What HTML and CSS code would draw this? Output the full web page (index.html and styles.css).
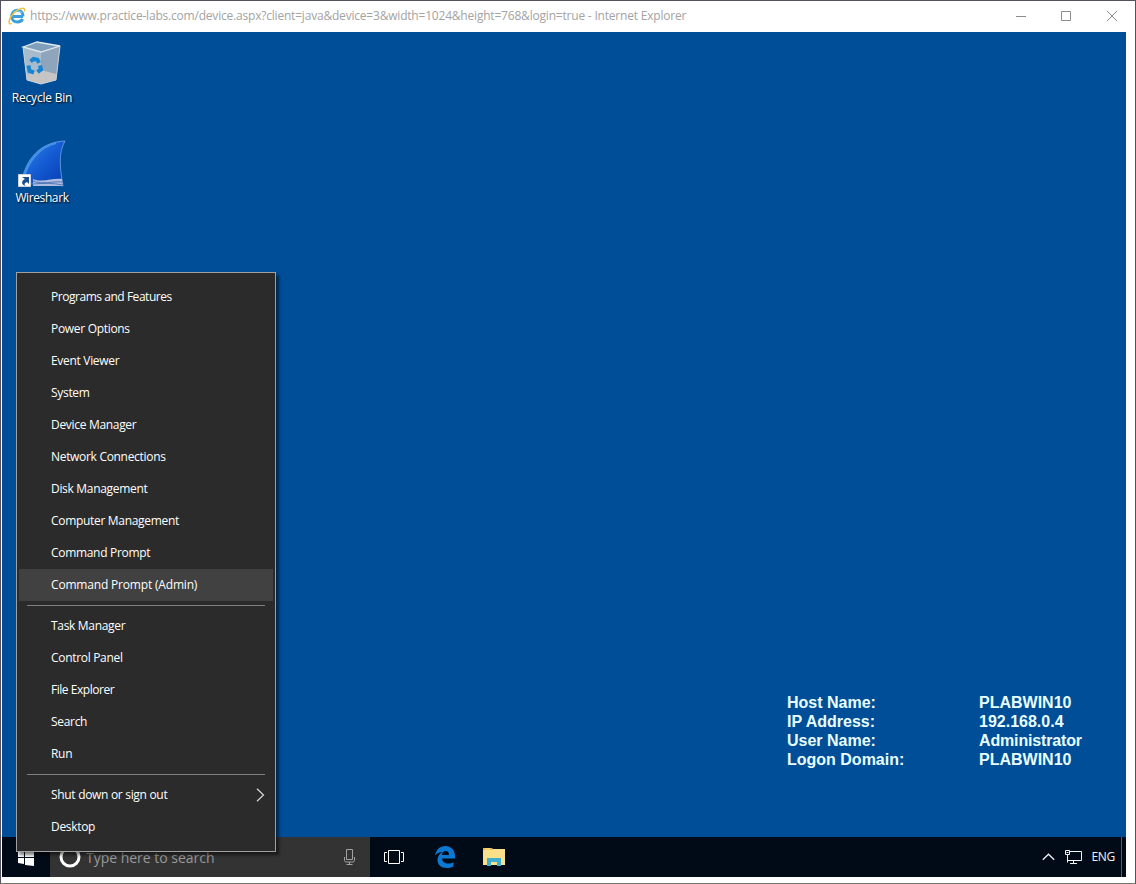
FILE: index.html
```html
<!DOCTYPE html>
<html lang="en">
<head>
<meta charset="utf-8">
<title>Internet Explorer</title>
<link rel="stylesheet" href="styles.css">
</head>
<body>
<div class="window">
  <header class="titlebar">
    <svg class="ie" width="18" height="18" viewBox="0 0 18 18" fill="none">
      <path d="M15.2 9.600H5.200M15 9.300C15 5.600 12.600 3.200 9.400 3.200S3.600 5.800 3.600 9.200s2.500 5.700 5.800 5.700c2.300 0 4.300-1 5.200-2.900" stroke="#3b9fdc" stroke-width="3"/>
      <path d="M14 6C12 3.500 8 3 5.500 5.500" stroke="#79c9f0" stroke-width="1.200"/>
      <path d="M3.600 16.300C1.500 17.500.5 16.300 1.300 13.500 2.500 9 7 3.500 12.500 1.600c3.500-1.200 4.800.4 3.800 3" stroke="#ecc443" stroke-width="1.500"/>
    </svg>
    <span class="title">https://www.practice-labs.com/device.aspx?client=java&amp;device=3&amp;width=1024&amp;height=768&amp;login=true - Internet Explorer</span>
    <svg class="controls" width="104" height="12" viewBox="0 0 104 12" fill="none" stroke="#8c8c8c">
      <path d="M1 6.500h10M46.500 1.500h9v9h-9zM92 1l10 10M102 1L92 11"/>
    </svg>
  </header>
  <main class="desktop">
    <div class="shortcuts">
      <div class="shortcut bin">
        <svg width="48" height="48" viewBox="0 0 48 48">
          <path d="M5 8L19 3l23 4-4 34-15 4-14-4z" fill="#a9bdcd"/>
          <path d="M5 8l18 5v32L9 41z" fill="#a7bbcc"/>
          <path d="M23 13l19-6-4 34-15 4z" fill="#8fa5bc"/>
          <path d="M9 36l14-5 15 4v6l-15 4-14-4z" fill="#c6c5c4"/>
          <path d="M5 8L19 3l23 4-19 6z" fill="#7f9fbc" stroke="#e2e9ed" stroke-width="1.300"/>
          <path d="M5 8l4 33 14 4 15-4 4-34" fill="none" stroke="#c5d0da"/>
          <g fill="none" stroke="#1683d3" stroke-width="4"><path d="M12.500 22.500l3-2.500 4 .8 1.500 3M10.500 26.500l1 5.500 4.500 1.500M19.500 33l3.500-2.500-1-4"/></g>
        </svg>
        <span>Recycle Bin</span>
      </div>
      <div class="shortcut shark">
        <svg width="48" height="48" viewBox="0 0 48 48">
          <defs><linearGradient id="fin" x1="0" y1="0" x2="1" y2="1"><stop stop-color="#3587e8"/><stop offset=".5" stop-color="#145bd3"/><stop offset="1" stop-color="#063bb0"/></linearGradient></defs>
          <path d="M2 46C6 20 21 3 46 2 39 14 41 29 44 47c-12-3-28-3-42-1z" fill="url(#fin)" stroke="#82aee9" stroke-width=".7"/>
          <path d="M4 41C9 21 21 8 37 4" fill="none" stroke="#4292ea" stroke-width="2"/>
          <path d="M14 40c9 4 19-1 29 0l1 7H14z" fill="#aebdde"/>
          <path d="M14 42c10 4 19 0 30 1M14 45c11-1 20-1 30 1" fill="none" stroke="#3f66b0" stroke-width=".8"/>
          <path d="M-.5 35.500h12v12H-.5z" fill="#fff" stroke="#d1d5db"/>
          <path d="M3 38h7v7l-2-2c-3 1-3 3-1 4-5-1-5-5-1-7z" fill="#164e91"/>
        </svg>
        <span>Wireshark</span>
      </div>
    </div>
    <dl class="hostinfo">
      <dt>Host Name:</dt><dd>PLABWIN10</dd>
      <dt>IP Address:</dt><dd>192.168.0.4</dd>
      <dt>User Name:</dt><dd class="user">Administrator</dd>
      <dt>Logon Domain:</dt><dd>PLABWIN10</dd>
    </dl>
  </main>
  <footer class="taskbar">
    <div class="start">
      <svg width="16" height="16" viewBox="0 0 16 16" fill="#fff"><path d="M0 2l6-1v6H0zM7 1l9-1v7H7zM0 8h6v6l-6-1zM7 8h9v8l-9-1z"/></svg>
    </div>
    <div class="search">
      <svg width="22" height="22" viewBox="0 0 22 22" fill="none" stroke="#fff"><circle cx="11" cy="11" r="9" stroke-width="3"/></svg>
      <span>Type here to search</span>
      <svg class="mic" width="13" height="18" viewBox="0 0 13 18" fill="none" stroke="#a2a2a2"><path d="M3.500 1.500h6v10h-6zM1.500 9v3.500l1 1.500h8l1-1.500V9M6.500 14v2.500M3.500 16.500h6"/></svg>
    </div>
    <svg class="taskview" width="22" height="16" viewBox="0 0 22 16" fill="none" stroke="#fff"><path d="M5.500 1.500h11v13h-11zM4 3.500H1.500v9H4M18 3.500h2.500v9H18"/></svg>
    <svg class="edge" width="20" height="22" viewBox="0 0 20 22" fill="#0b78d4"><path d="M0 9.500C1.300 3.500 5 0 10.300 0 16 0 20 4.200 20 10v2.600H7c.2 3.500 3 5 6.200 5 2.200 0 4-.6 5.300-1.400v4C16.800 21.300 14.500 22 12 22 6 22 2.500 18.500 2.500 14c0-3.500 2-6.600 5.400-8C4.800 5.800 2 7.100 0 9.500zM7 9h7c0-2.600-1.100-4-3.200-4C8.700 5 7.400 6.400 7 9z"/></svg>
    <svg class="folder" width="22" height="18" viewBox="0 0 22 18"><path d="M0 0h8l2 1h12v16H0z" fill="#fbe08c"/><path d="M0 0h8l2 1v1H0z" fill="#e6b846"/><path d="M2 1h5" stroke="#fff1b1"/><path d="M4 18V10h14v8h-4v-4H8v4z" fill="#3faed0"/></svg>
    <div class="tray">
      <svg class="chevron" width="13" height="8" viewBox="0 0 13 8" fill="none" stroke="#eef2f5" stroke-width="1.300"><path d="M.8 6.800l5.700-5.600 5.700 5.600"/></svg>
      <svg class="network" width="17" height="14" viewBox="0 0 17 14" fill="none" stroke="#f1f4f6"><path d="M5 1.500h11.500v9H3M.5.500h4v4h-4zM2.500 4.500v8M1.500 2.500h2M5 13.500h7M8.500 10.500v3"/></svg>
      <span>ENG</span>
      <i class="peek"></i>
    </div>
  </footer>
  <nav class="menu">
    <div class="item tight"><span>Programs and Features</span></div>
    <div class="item"><span>Power Options</span></div>
    <div class="item"><span>Event Viewer</span></div>
    <div class="item"><span>System</span></div>
    <div class="item"><span>Device Manager</span></div>
    <div class="item"><span>Network Connections</span></div>
    <div class="item"><span>Disk Management</span></div>
    <div class="item"><span>Computer Management</span></div>
    <div class="item"><span>Command Prompt</span></div>
    <div class="item active"><span>Command Prompt (Admin)</span></div>
    <hr>
    <div class="item"><span>Task Manager</span></div>
    <div class="item"><span>Control Panel</span></div>
    <div class="item tight"><span>File Explorer</span></div>
    <div class="item"><span>Search</span></div>
    <div class="item"><span>Run</span></div>
    <hr>
    <div class="item"><span>Shut down or sign out</span>
      <svg width="9" height="14" viewBox="0 0 9 14" fill="none" stroke="#d8d8d8" stroke-width="1.200"><path d="M1 .7L7.500 7 1 13.300"/></svg>
    </div>
    <div class="item"><span>Desktop</span></div>
  </nav>
</div>
</body>
</html>
```
FILE: styles.css
```css
* { box-sizing: border-box; }
body { margin: 0; font-family: "Open Sans", "Noto Sans", sans-serif; font-size: 12px; }
svg { flex: none; display: block; overflow: visible; }
.window {
  position: relative;
  width: 1136px;
  height: 884px;
  display: flex;
  flex-direction: column;
  background: #fff;
  border: 1px solid #56525d;
  border-bottom-color: #77766f;
  overflow: hidden;
}
.titlebar { height: 31px; flex: none; display: flex; align-items: center; padding: 0 16px 2px 7px; color: #a3a3a3; }
.title { margin-left: 4px; font-size: 12px; letter-spacing: -0.2px; white-space: nowrap; }
.controls { margin-left: auto; }
.desktop { flex: none; display: flex; height: 805px; margin: 0 9px 0 1px; background: #004e98; }
.shortcuts { width: 80px; padding-top: 7px; }
.shortcut { height: 100px; display: flex; flex-direction: column; align-items: center; color: #fff; letter-spacing: -0.22px; text-shadow: 1px 1px 2px #000; }
.shortcut span { margin-top: 2px; line-height: 18px; }
.shark { letter-spacing: -0.4px; }
.shark svg { margin-left: 2px; }
.hostinfo {
  margin: auto 20px 68px auto;
  display: grid;
  grid-template-columns: 192px 127px;
  grid-auto-rows: 19px;
  font: bold 16px/19px "Liberation Sans", sans-serif;
  color: #e9ffff;
}
.hostinfo dd { margin: 0; }
.hostinfo .user { letter-spacing: -0.15px; }
.taskbar { height: 40px; flex: none; display: flex; align-items: center; margin: 0 9px 0 1px; background: #000b17; }
.start { width: 48px; display: flex; padding-left: 16px; padding-top: 1px; }
.search { width: 320px; height: 40px; display: flex; align-items: center; padding: 0 14px 0 9px; background: #333; color: #999; }
.search span { margin-left: 5px; font-size: 14px; letter-spacing: -0.02px; }
.mic { margin-left: auto; }
.taskview { margin-left: 13px; }
.edge { margin-left: 30px; }
.folder { margin-left: 28px; }
.tray { margin-left: auto; height: 40px; display: flex; align-items: center; color: #f1f4f6; }
.network { margin-left: 10px; }
.tray span { margin-left: 9px; padding-bottom: 2px; letter-spacing: -0.3px; }
.peek { width: 1px; height: 40px; margin: 0 4px 0 6px; background: #53606a; }
.menu {
  position: absolute;
  left: 15px;
  top: 271px;
  width: 260px;
  height: 580px;
  padding: 8px 2px;
  background: #2b2b2b;
  border: 1px solid #a0a0a0;
  box-shadow: 3px 3px 3px rgba(0, 0, 0, 0.5);
  color: #fff;
}
.item { height: 32px; display: flex; align-items: center; justify-content: space-between; padding: 0 8px 0 32px; letter-spacing: -0.31px; white-space: nowrap; }
.item span { padding-bottom: 2px; }
.tight { letter-spacing: -0.46px; }
.active { background: #414141; letter-spacing: -0.18px; }
.menu hr { margin: 4px 8px; border: 0; height: 1px; background: #808080; }
```
